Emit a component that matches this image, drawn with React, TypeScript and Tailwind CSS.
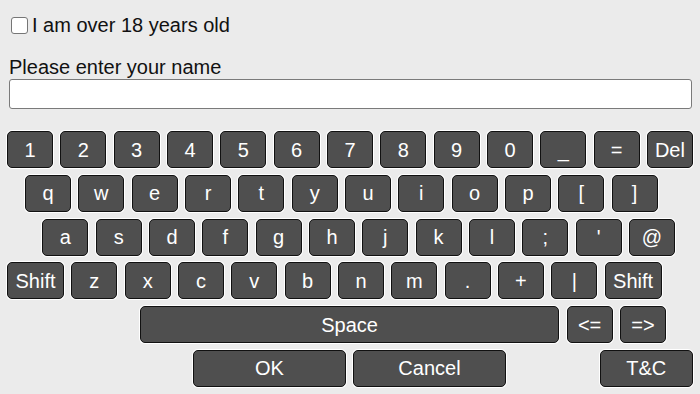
import React from "react";

type K = { l: string; w?: number };

const Key = ({ l, w = 46 }: K) => (
  <div
    className="flex h-[37px] shrink-0 items-center justify-center rounded-[5px] border border-[#111] bg-[#4f4f4f] text-[20px] leading-none text-white shadow-[0_0_0_1px_#ffffff]"
    style={{ width: w }}
  >
    {l}
  </div>
);

const Row = ({ keys, ml }: { keys: K[]; ml: number }) => (
  <div className="flex gap-[7.33px]" style={{ marginLeft: ml }}>
    {keys.map((k, i) => (
      <Key key={i} {...k} />
    ))}
  </div>
);

const s = (str: string): K[] => str.split(" ").map((l) => ({ l }));

export default function App() {
  return (
    <div
      className="h-[394px] w-[700px] overflow-hidden bg-[#ebebeb] text-[#111]"
      style={{ fontFamily: '"Liberation Sans", Arial, sans-serif' }}
    >
      <div className="flex items-center pl-[11px] pt-[14px] text-[20px] leading-[23px]">
        <div className="h-[17px] w-[17px] rounded-[3px] border border-[#767676] bg-white" />
        <span className="ml-[4px]">I am over 18 years old</span>
      </div>
      <div className="mt-[18.5px] pl-[9px] text-[20px] leading-[23px]">Please enter your name</div>
      <div className="ml-[8.5px] h-[30px] w-[683px] rounded-[3px] border-[1.5px] border-[#7a7a7a] bg-white" />
      <div className="mt-[22.5px] flex flex-col gap-[6.8px]">
        <Row ml={7} keys={s("1 2 3 4 5 6 7 8 9 0 _ = Del")} />
        <Row ml={25} keys={s("q w e r t y u i o p [ ]")} />
        <Row ml={42.3} keys={s("a s d f g h j k l ; ' @")} />
        <Row
          ml={7}
          keys={[{ l: "Shift", w: 57 }, ...s("z x c v b n m . + |"), { l: "Shift", w: 57 }]}
        />
        <Row ml={140} keys={[{ l: "Space", w: 419.3 }, { l: "<=" }, { l: "=>" }]} />
        <div className="flex" style={{ marginLeft: 193 }}>
          <Key l="OK" w={152.7} />
          <div className="ml-[7.6px]">
            <Key l="Cancel" w={152.4} />
          </div>
          <div className="ml-[94.3px]">
            <Key l="T&C" w={92.7} />
          </div>
        </div>
      </div>
    </div>
  );
}
